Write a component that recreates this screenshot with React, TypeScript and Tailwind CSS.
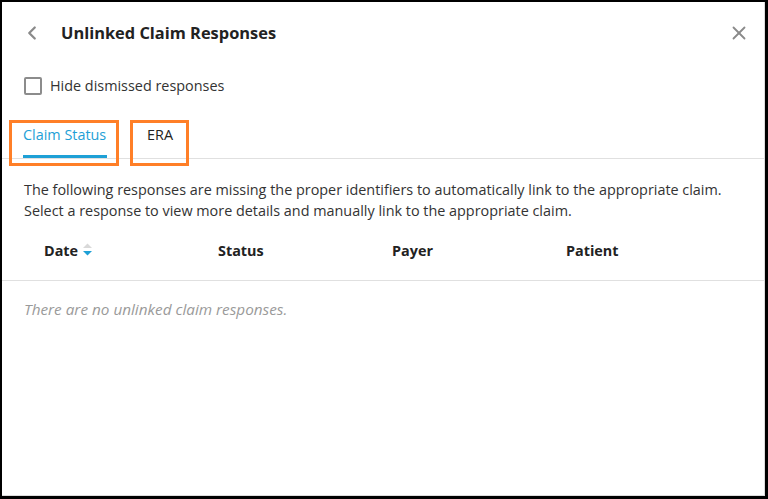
import { ChevronLeft, X } from 'lucide-react'

const columns = ['Date', 'Status', 'Payer', 'Patient']

function SortIcon() {
  return (
    <svg width="11" height="18" viewBox="0 0 11 18" className="ml-[4px]">
      <path d="M1 7 L5.5 2.5 L10 7 Z" fill="#d9d9d9" />
      <path d="M1 10 L5.5 14.5 L10 10 Z" fill="#1ea0d6" />
    </svg>
  )
}

export default function App() {
  return (
    <div
      className="w-[768px] h-[499px] bg-white border-l-2 border-t-2 border-r-[3px] border-b-[3px] border-black overflow-hidden"
      style={{ fontFamily: '"Open Sans", "Noto Sans", sans-serif' }}
    >
      <div className="h-full border-r border-b border-[#dcdcdc] flex flex-col">
        {/* Header */}
        <div className="flex items-center h-[62px] pl-[19px] pr-[14px]">
          <ChevronLeft size={22} strokeWidth={2.5} className="text-[#8a8a8a]" />
          <h1 className="ml-[18px] text-[16.4px] font-bold text-[#222]">
            Unlinked Claim Responses
          </h1>
          <button className="ml-auto text-[#8a8a8a]">
            <X size={22} strokeWidth={2} />
          </button>
        </div>

        {/* Hide dismissed */}
        <label className="flex items-center pl-[22px] h-[22px] mt-[11px]">
          <span className="w-[18px] h-[18px] border-2 border-[#8c8c8c] rounded-[2px]" />
          <span className="ml-[8px] text-[14.4px] text-[#333]">Hide dismissed responses</span>
        </label>

        {/* Tabs */}
        <div className="mt-[23px] border-b border-[#e0e0e0] flex pl-[7px] gap-[11px] h-[39px]">
          <div className="border-[3px] border-[#ff7f27] h-[46px] w-[110px] pl-[11px] flex flex-col">
            <span className="text-[14.4px] text-[#1ea0d6] leading-[20px] mt-[2px]">Claim Status</span>
            <span className="mt-auto mb-[5px] h-[3px] w-[84px] bg-[#1ea0d6]" />
          </div>
          <div className="border-[3px] border-[#ff7f27] h-[46px] w-[59px] flex justify-center pl-[1px]">
            <span className="text-[14.4px] text-[#222] leading-[20px] mt-[2px]">ERA</span>
          </div>
        </div>

        {/* Description */}
        <p className="mt-[20px] pl-[22px] text-[14.4px] leading-[21px] text-[#333]">
          The following responses are missing the proper identifiers to automatically link to the
          appropriate claim.
          <br />
          Select a response to view more details and manually link to the appropriate claim.
        </p>

        {/* Table header */}
        <div className="grid grid-cols-[174px_174px_174px_1fr] pl-[22px] border-b border-[#e0e0e0] h-[60px] items-center">
          {columns.map((c, i) => (
            <div key={c} className="pl-[20px] flex items-center text-[14.4px] font-bold text-[#222]">
              {c}
              {i === 0 && <SortIcon />}
            </div>
          ))}
        </div>

        <p className="pl-[22px] mt-[17px] text-[15.3px] italic text-[#9a9a9a]">
          There are no unlinked claim responses.
        </p>
      </div>
    </div>
  )
}
